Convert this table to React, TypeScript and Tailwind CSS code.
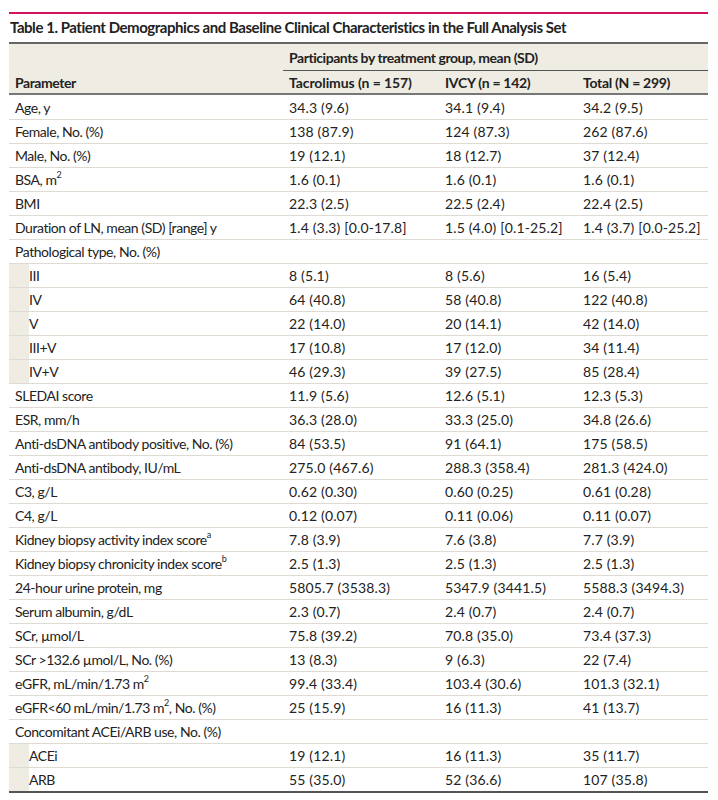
const rows: { label: React.ReactNode; a?: string; b?: string; c?: string; indent?: boolean }[] = [
  { label: "Age, y", a: "34.3 (9.6)", b: "34.1 (9.4)", c: "34.2 (9.5)" },
  { label: "Female, No. (%)", a: "138 (87.9)", b: "124 (87.3)", c: "262 (87.6)" },
  { label: "Male, No. (%)", a: "19 (12.1)", b: "18 (12.7)", c: "37 (12.4)" },
  { label: <>BSA, m<sup className="text-[9px]">2</sup></>, a: "1.6 (0.1)", b: "1.6 (0.1)", c: "1.6 (0.1)" },
  { label: "BMI", a: "22.3 (2.5)", b: "22.5 (2.4)", c: "22.4 (2.5)" },
  { label: "Duration of LN, mean (SD) [range] y", a: "1.4 (3.3) [0.0-17.8]", b: "1.5 (4.0) [0.1-25.2]", c: "1.4 (3.7) [0.0-25.2]" },
  { label: "Pathological type, No. (%)" },
  { label: "III", a: "8 (5.1)", b: "8 (5.6)", c: "16 (5.4)", indent: true },
  { label: "IV", a: "64 (40.8)", b: "58 (40.8)", c: "122 (40.8)", indent: true },
  { label: "V", a: "22 (14.0)", b: "20 (14.1)", c: "42 (14.0)", indent: true },
  { label: "III+V", a: "17 (10.8)", b: "17 (12.0)", c: "34 (11.4)", indent: true },
  { label: "IV+V", a: "46 (29.3)", b: "39 (27.5)", c: "85 (28.4)", indent: true },
  { label: "SLEDAI score", a: "11.9 (5.6)", b: "12.6 (5.1)", c: "12.3 (5.3)" },
  { label: "ESR, mm/h", a: "36.3 (28.0)", b: "33.3 (25.0)", c: "34.8 (26.6)" },
  { label: "Anti-dsDNA antibody positive, No. (%)", a: "84 (53.5)", b: "91 (64.1)", c: "175 (58.5)" },
  { label: "Anti-dsDNA antibody, IU/mL", a: "275.0 (467.6)", b: "288.3 (358.4)", c: "281.3 (424.0)" },
  { label: "C3, g/L", a: "0.62 (0.30)", b: "0.60 (0.25)", c: "0.61 (0.28)" },
  { label: "C4, g/L", a: "0.12 (0.07)", b: "0.11 (0.06)", c: "0.11 (0.07)" },
  { label: <>Kidney biopsy activity index score<sup className="text-[9px]">a</sup></>, a: "7.8 (3.9)", b: "7.6 (3.8)", c: "7.7 (3.9)" },
  { label: <>Kidney biopsy chronicity index score<sup className="text-[9px]">b</sup></>, a: "2.5 (1.3)", b: "2.5 (1.3)", c: "2.5 (1.3)" },
  { label: "24-hour urine protein, mg", a: "5805.7 (3538.3)", b: "5347.9 (3441.5)", c: "5588.3 (3494.3)" },
  { label: "Serum albumin, g/dL", a: "2.3 (0.7)", b: "2.4 (0.7)", c: "2.4 (0.7)" },
  { label: "SCr, µmol/L", a: "75.8 (39.2)", b: "70.8 (35.0)", c: "73.4 (37.3)" },
  { label: "SCr >132.6 µmol/L, No. (%)", a: "13 (8.3)", b: "9 (6.3)", c: "22 (7.4)" },
  { label: <>eGFR, mL/min/1.73 m<sup className="text-[9px]">2</sup></>, a: "99.4 (33.4)", b: "103.4 (30.6)", c: "101.3 (32.1)" },
  { label: <>eGFR&lt;60 mL/min/1.73 m<sup className="text-[9px]">2</sup>, No. (%)</>, a: "25 (15.9)", b: "16 (11.3)", c: "41 (13.7)" },
  { label: "Concomitant ACEi/ARB use, No. (%)" },
  { label: "ACEi", a: "19 (12.1)", b: "16 (11.3)", c: "35 (11.7)", indent: true },
  { label: "ARB", a: "55 (35.0)", b: "52 (36.6)", c: "107 (35.8)", indent: true },
]

const cols = "grid grid-cols-[274px_156px_138px_131px]"

export default function App() {
  return (
    <div className="w-[718px] h-[800px] bg-white pt-3 text-[#222] font-['Lato',sans-serif]">
      <div className="mx-[9px] w-[699px]">
        <div className="h-[2px] bg-[#d3135d]" />
        <h1 className="pl-px pt-[4px] pb-[5px] text-[15px] font-bold leading-[19px] tracking-[-0.45px]">
          Table 1. Patient Demographics and Baseline Clinical Characteristics in the Full Analysis Set
        </h1>
        <div className="border-t-2 border-[#666] bg-[#efece3] text-[14px] font-bold tracking-[-0.45px]">
          <div className={cols}>
            <div />
            <div className="col-span-3 pl-[6px] pt-[5px] pb-[3px] leading-[18px] border-b border-[#555]">
              Participants by treatment group, mean (SD)
            </div>
          </div>
          <div className={`${cols} h-[22px] items-center`}>
            <div className="pl-[6px]">Parameter</div>
            <div className="pl-[6px] tracking-[-0.1px]">Tacrolimus (n = 157)</div>
            <div className="pl-[6px] tracking-[-0.3px]">IVCY (n = 142)</div>
            <div className="pl-[6px] tracking-[-0.3px]">Total (N = 299)</div>
          </div>
        </div>
        <div className="border-t-2 border-[#777] border-b-2 border-b-[#555] text-[14px]">
          {rows.map((r, i) => (
            <div key={i} className={`${cols} h-[24px] items-stretch ${i > 0 ? "border-t border-[#dedbd3]" : ""}`}>
              <div className="flex items-stretch tracking-[-0.45px]">
                {r.indent && <div className="w-[20px] shrink-0 bg-[#efece3]" />}
                <div className={`flex items-center ${r.indent ? "pl-0" : "pl-[6px]"} whitespace-nowrap`}>{r.label}</div>
              </div>
              <div className="flex items-center pl-[6px] tracking-[0.15px]">{r.a}</div>
              <div className="flex items-center pl-[6px] tracking-[0.15px]">{r.b}</div>
              <div className="flex items-center pl-[6px] tracking-[0.15px]">{r.c}</div>
            </div>
          ))}
        </div>
      </div>
    </div>
  )
}
